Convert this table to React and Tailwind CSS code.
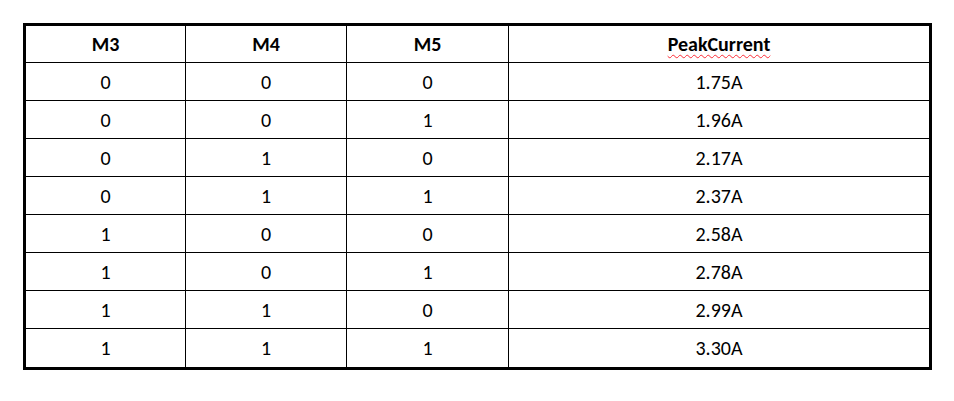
import React from "react";

const rows = [
  ["0", "0", "0", "1.75A"],
  ["0", "0", "1", "1.96A"],
  ["0", "1", "0", "2.17A"],
  ["0", "1", "1", "2.37A"],
  ["1", "0", "0", "2.58A"],
  ["1", "0", "1", "2.78A"],
  ["1", "1", "0", "2.99A"],
  ["1", "1", "1", "3.30A"],
];

function Row({ cells, header }) {
  return (
    <div className={"flex divide-x divide-black " + (header ? "h-[37px]" : "h-[38px]")}>
      {cells.map((c, i) => (
        <div
          key={i}
          className={[
            "flex items-center justify-center",
            i === 0 ? "w-[160px]" : i === 1 ? "w-[161px]" : i === 2 ? "w-[162px]" : "w-[420px]",
            header ? "font-bold" : "",
          ].join(" ")}
        >
          {header && i === 3 ? (
            <span className="underline decoration-wavy decoration-red-500 decoration-1 underline-offset-[3px]">{c}</span>
          ) : (
            c
          )}
        </div>
      ))}
    </div>
  );
}

export default function App() {
  return (
    <div className="w-[954px] h-[401px] bg-white pt-[23px] pl-[23px] text-black text-[20px] leading-none" style={{ fontFamily: "Carlito, Lato, 'Liberation Sans', sans-serif" }}>
      <div className="w-[909px] border-[3px] border-black flex flex-col divide-y divide-black">
        <Row cells={["M3", "M4", "M5", "PeakCurrent"]} header />
        {rows.map((r, i) => (
          <Row key={i} cells={r} />
        ))}
      </div>
    </div>
  );
}
